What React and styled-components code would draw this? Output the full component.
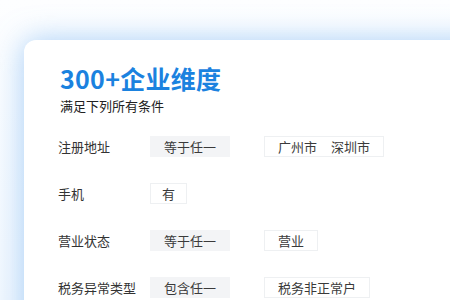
import React from "react";
import styled, { createGlobalStyle } from "styled-components";

const GlobalStyle = createGlobalStyle`
  html, body {
    margin: 0;
    padding: 0;
    width: 450px;
    height: 300px;
    overflow: hidden;
    background: linear-gradient(180deg, #fdfeff 0%, #f2f8fe 100%);
    font-family: "Noto Sans CJK SC", "Noto Sans", sans-serif;
  }
`;

const Page = styled.div`
  width: 450px;
  height: 300px;
  padding: 40px 0 0 24px;
  box-sizing: border-box;
  overflow: hidden;
`;

const Card = styled.div`
  width: 480px;
  height: 320px;
  box-sizing: border-box;
  padding: 23px 0 0 36px;
  background: #ffffff;
  border-radius: 12px;
  box-shadow: 0 0 30px rgba(100, 170, 240, 0.55);
`;

const Title = styled.h1`
  margin: 0;
  font-size: 25px;
  line-height: 30px;
  font-weight: 700;
  color: #1b82df;
  letter-spacing: 0.3px;
`;

const Subtitle = styled.div`
  margin-top: 4px;
  font-size: 13px;
  line-height: 18px;
  color: #222;
`;

const Rows = styled.div`
  margin-top: 20px;
  display: flex;
  flex-direction: column;
  gap: 25px;
`;

const Row = styled.div`
  display: grid;
  grid-template-columns: 92px 114px auto;
  align-items: center;
  height: 22px;
  margin-left: -2px;
`;

const Label = styled.span`
  font-size: 13px;
  color: #333;
`;

const Tag = styled.span`
  justify-self: start;
  display: inline-flex;
  align-items: center;
  gap: 14px;
  height: 21px;
  padding: 0 ${(p) => (p.$compact ? 11 : 13)}px;
  box-sizing: border-box;
  font-size: 13px;
  color: #3a3a3a;
  background: ${(p) => (p.$fill ? "#f3f4f6" : "#ffffff")};
  border: 1px solid ${(p) => (p.$fill ? "#f3f4f6" : "#eef0f2")};
`;

const rules = [
  { label: "注册地址", op: "等于任一", values: ["广州市", "深圳市"] },
  { label: "手机", op: "有", values: [] },
  { label: "营业状态", op: "等于任一", values: ["营业"] },
  { label: "税务异常类型", op: "包含任一", values: ["税务非正常户"] },
];

export default function App() {
  return (
    <Page>
      <GlobalStyle />
      <Card>
        <Title>300+企业维度</Title>
        <Subtitle>满足下列所有条件</Subtitle>
        <Rows>
          {rules.map((r) => (
            <Row key={r.label}>
              <Label>{r.label}</Label>
              <Tag $fill={r.values.length > 0} $compact={r.values.length === 0}>
                {r.op}
              </Tag>
              {r.values.length > 0 && (
                <Tag>
                  {r.values.map((v) => (
                    <span key={v}>{v}</span>
                  ))}
                </Tag>
              )}
            </Row>
          ))}
        </Rows>
      </Card>
    </Page>
  );
}
